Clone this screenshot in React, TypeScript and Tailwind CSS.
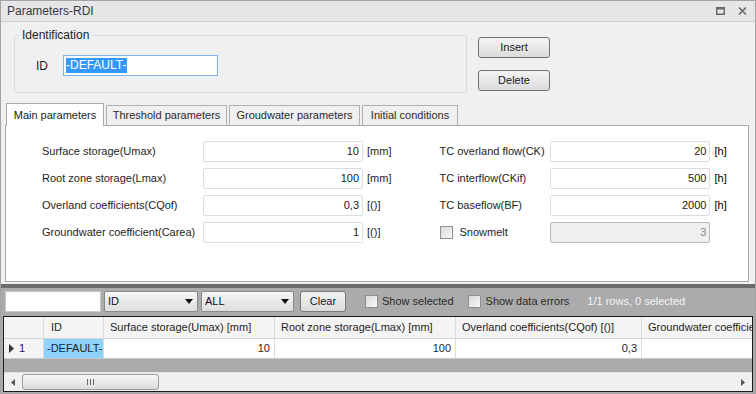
import React from 'react'

const font = { fontFamily: '"Liberation Sans", Arial, sans-serif' }

function Field({ value, disabled }: { value: string; disabled?: boolean }) {
  return (
    <div
      className={`w-[160px] h-[21px] border rounded-[2px] flex items-center justify-end pr-[3px] ${
        disabled ? 'bg-[#f0f0f0] border-[#b9b9b9] text-[#8a8a8a]' : 'bg-white border-[#d9dde2] text-[#1a1a1a]'
      }`}
    >
      {value}
    </div>
  )
}

function Check() {
  return (
    <div className="w-[13px] h-[13px] border border-[#8e8f8f] bg-gradient-to-br from-[#dcdcdc] to-[#f6f6f6] shrink-0" />
  )
}

function Row({ label, value, unit }: { label: string; value: string; unit: string }) {
  return (
    <div className="flex items-center h-[21px]">
      <div className="w-[161px] text-[#1e1e1e]">{label}</div>
      <Field value={value} />
      <div className="ml-[4px] text-[#1e1e1e]">{unit}</div>
    </div>
  )
}

function Combo({ label, width }: { label: string; width: string }) {
  return (
    <div
      className={`${width} h-[21px] border border-[#8a8a8a] rounded-[2px] bg-gradient-to-b from-[#f6f6f6] to-[#dedede] flex items-center justify-between pl-[3px] pr-[4px]`}
    >
      <span className="text-[#111]">{label}</span>
      <svg width="8" height="5" viewBox="0 0 8 5">
        <path d="M0 0h8L4 5z" fill="#111" />
      </svg>
    </div>
  )
}

export default function App() {
  return (
    <div
      className="w-[756px] h-[394px] bg-[#f0f0f0] border border-[#a3a3a3] flex flex-col text-[11px] overflow-hidden"
      style={font}
    >
      {/* title bar */}
      <div className="h-[21px] shrink-0 bg-[#e6e6e9] border-b border-[#cfcfd3] flex items-center pl-[6px] pr-[8px] text-[12px] text-[#3a3a3a]">
        <span className="flex-1">Parameters-RDI</span>
        <svg width="9" height="8" viewBox="0 0 9 8" className="mr-[13px]">
          <rect x="0.75" y="0.75" width="7.5" height="6.5" fill="none" stroke="#6a6a6a" strokeWidth="1.5" />
          <rect x="0" y="0" width="9" height="2.5" fill="#6a6a6a" />
        </svg>
        <svg width="9" height="8" viewBox="0 0 9 8">
          <path d="M1 0.5l7 7M8 0.5l-7 7" stroke="#6a6a6a" strokeWidth="1.6" />
        </svg>
      </div>

      {/* identification area */}
      <div className="h-[81px] shrink-0 flex pl-[13px]">
        <fieldset className="mt-[6px] w-[453px] h-[65px] border border-[#d3dde4] rounded-[3px]">
          <legend className="ml-[4px] px-[3px] text-[12px] text-[#1e1e1e] leading-[14px]">Identification</legend>
          <div className="flex items-center mt-[13px] pl-[21px]">
            <span className="w-[27px] text-[12px] text-[#1e1e1e]">ID</span>
            <div className="w-[155px] h-[21px] bg-white border border-[#7eb4ea] flex items-center pl-[2px]">
              <span className="bg-[#3399ff] text-white text-[12px] leading-[15px] pr-[1px]">-DEFAULT-</span>
            </div>
          </div>
        </fieldset>
        <div className="ml-[11px] mt-[15px] flex flex-col gap-[12px]">
          {['Insert', 'Delete'].map(t => (
            <div
              key={t}
              className="w-[72px] h-[21px] border border-[#707070] rounded-[3px] bg-gradient-to-b from-[#f4f4f4] to-[#dcdcdc] flex items-center justify-center text-[#1a1a1a]"
            >
              {t}
            </div>
          ))}
        </div>
      </div>

      {/* tabs */}
      <div className="h-[22px] shrink-0 flex items-end pl-[5px] gap-[2px]">
        <div className="h-[23px] w-[98px] bg-white border border-[#a9a9a9] border-b-0 flex items-center justify-center text-[#1a1a1a] relative top-[1px] z-10">
          Main parameters
        </div>
        {[
          ['Threshold parameters', 'w-[121px]'],
          ['Groudwater parameters', 'w-[131px]'],
          ['Initial conditions', 'w-[96px]'],
        ].map(([t, w]) => (
          <div
            key={t}
            className={`h-[20px] ${w} bg-[#f0f0f0] border border-[#b0b0b0] border-b-0 flex items-center justify-center text-[#2a2a2a]`}
          >
            {t}
          </div>
        ))}
      </div>
      <div className="h-[157px] shrink-0 mx-[4px] mr-[6px] bg-white border border-[#a9a9a9] flex pl-[36px] pt-[15px]">
        <div className="flex flex-col gap-[6px]">
          <Row label="Surface storage(Umax)" value="10" unit="[mm]" />
          <Row label="Root zone storage(Lmax)" value="100" unit="[mm]" />
          <Row label="Overland coefficients(CQof)" value="0,3" unit="[()]" />
          <Row label="Groundwater coefficient(Carea)" value="1" unit="[()]" />
        </div>
        <div className="flex flex-col gap-[6px] ml-[48px]">
          <div className="flex items-center h-[21px]">
            <div className="w-[111px] text-[#1e1e1e]">TC overland flow(CK)</div>
            <Field value="20" />
            <div className="ml-[4px]">[h]</div>
          </div>
          <div className="flex items-center h-[21px]">
            <div className="w-[111px] text-[#1e1e1e]">TC interflow(CKif)</div>
            <Field value="500" />
            <div className="ml-[4px]">[h]</div>
          </div>
          <div className="flex items-center h-[21px]">
            <div className="w-[111px] text-[#1e1e1e]">TC baseflow(BF)</div>
            <Field value="2000" />
            <div className="ml-[4px]">[h]</div>
          </div>
          <div className="flex items-center h-[21px]">
            <div className="w-[111px] flex items-center gap-[6px] pl-[1px] text-[#1e1e1e]">
              <Check />
              Snowmelt
            </div>
            <Field value="3" disabled />
          </div>
        </div>
      </div>

      {/* splitter */}
      <div className="h-[2px] shrink-0" />
      <div className="h-[4px] shrink-0 bg-[#6b6b6b]" />

      {/* filter toolbar */}
      <div className="h-[27px] shrink-0 bg-[#ababab] flex items-center pl-[4px] text-[#2a2a2a]">
        <div className="w-[96px] h-[21px] bg-white border border-[#c8c8c8]" />
        <div className="ml-[3px]">
          <Combo label="ID" width="w-[94px]" />
        </div>
        <div className="ml-[3px]">
          <Combo label="ALL" width="w-[93px]" />
        </div>
        <div className="ml-[6px] w-[46px] h-[21px] border border-[#7a7a7a] rounded-[3px] bg-gradient-to-b from-[#f4f4f4] to-[#dcdcdc] flex items-center justify-center text-[#1a1a1a]">
          Clear
        </div>
        <div className="ml-[19px] flex items-center gap-[4px]">
          <Check />
          <span>Show selected</span>
        </div>
        <div className="ml-[14px] flex items-center gap-[5px]">
          <Check />
          <span>Show data errors</span>
        </div>
        <span className="ml-[18px] text-[#f4f4f4]">1/1 rows, 0 selected</span>
      </div>

      {/* grid */}
      <div className="flex-1 bg-[#ababab] px-[2px] pt-[1px] pb-[1px] flex">
        <div className="flex-1 border border-[#1a1a1a] bg-[#ababab] flex flex-col overflow-hidden">
          <div className="h-[22px] shrink-0 flex bg-[#f4f4f4] border-b border-[#d6d6d6] text-[#1e1e1e]">
            <div className="w-[40px] border-r border-[#dcdcdc]" />
            <div className="w-[60px] border-r border-[#dcdcdc] flex items-center pl-[7px]">ID</div>
            <div className="w-[171px] border-r border-[#dcdcdc] flex items-center pl-[6px]">Surface storage(Umax) [mm]</div>
            <div className="w-[181px] border-r border-[#dcdcdc] flex items-center pl-[6px]">Root zone storage(Lmax) [mm]</div>
            <div className="w-[186px] border-r border-[#dcdcdc] flex items-center pl-[6px]">Overland coefficients(CQof) [()]</div>
            <div className="flex-1 flex items-center pl-[6px] whitespace-nowrap overflow-hidden">Groundwater coefficient(Carea) [()]</div>
          </div>
          <div className="h-[20px] shrink-0 flex bg-white border-b border-[#c9c9c9] text-[#1e1e1e]">
            <div className="w-[40px] bg-[#f4f4f4] border-r border-[#dcdcdc] flex items-center pl-[5px] gap-[5px]">
              <svg width="5" height="9" viewBox="0 0 5 9">
                <path d="M0 0l5 4.5L0 9z" fill="#333" />
              </svg>
              <span>1</span>
            </div>
            <div className="w-[60px] bg-[#8fd2fb] border-r border-[#dcdcdc] flex items-center pl-[3px]">-DEFAULT-</div>
            <div className="w-[171px] border-r border-[#dcdcdc] flex items-center justify-end pr-[4px]">10</div>
            <div className="w-[181px] border-r border-[#dcdcdc] flex items-center justify-end pr-[4px]">100</div>
            <div className="w-[186px] border-r border-[#dcdcdc] flex items-center justify-end pr-[4px]">0,3</div>
            <div className="flex-1" />
          </div>
          <div className="flex-1" />
          <div className="h-[19px] shrink-0 bg-[#f0f0f0] border-t border-[#e2e2e2] flex items-center">
            <div className="w-[18px] flex justify-center">
              <svg width="4" height="7" viewBox="0 0 4 7">
                <path d="M4 0L0 3.5L4 7z" fill="#555" />
              </svg>
            </div>
            <div className="w-[137px] h-[16px] border border-[#9a9a9a] rounded-[3px] bg-gradient-to-b from-[#f7f7f7] to-[#dcdcdc] flex items-center justify-center gap-[1px]">
              <div className="w-[1px] h-[6px] bg-[#666]" />
              <div className="w-[1px] h-[6px] bg-[#666] ml-[1px]" />
              <div className="w-[1px] h-[6px] bg-[#666] ml-[1px]" />
            </div>
            <div className="flex-1" />
            <div className="w-[18px] flex justify-center">
              <svg width="4" height="7" viewBox="0 0 4 7">
                <path d="M0 0L4 3.5L0 7z" fill="#555" />
              </svg>
            </div>
          </div>
        </div>
      </div>
    </div>
  )
}
